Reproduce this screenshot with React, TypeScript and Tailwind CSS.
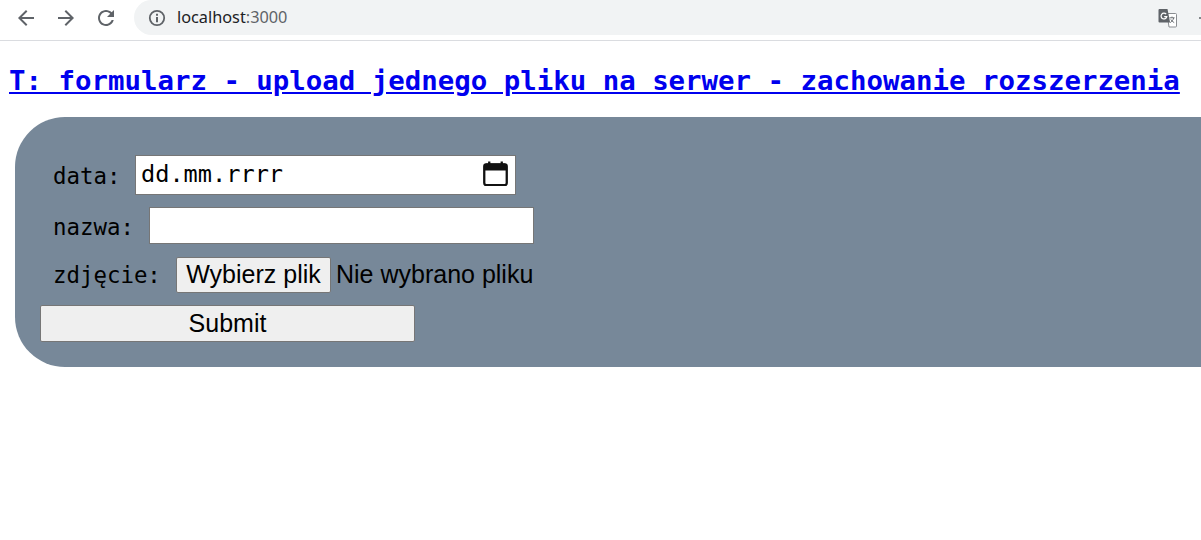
const labelClass = "font-['DejaVu_Sans_Mono',monospace] text-[22.4px] leading-none text-black"

function NavIcon({ d, className }: { d: string; className?: string }) {
  return (
    <svg viewBox="0 0 24 24" className={className} fill="#5f6368">
      <path d={d} />
    </svg>
  )
}

function TopBar() {
  return (
    <div className="flex h-[41px] items-start border-b border-[#dadce0] bg-white">
      <div className="flex h-[36px] w-[134px] shrink-0 items-center gap-[16px] pl-[14px]">
        <NavIcon className="h-[24px] w-[24px]" d="M20 11H7.83l5.59-5.59L12 4l-8 8 8 8 1.41-1.41L7.83 13H20v-2z" />
        <NavIcon className="h-[24px] w-[24px]" d="M12 4l-1.41 1.41L16.17 11H4v2h12.17l-5.58 5.59L12 20l8-8z" />
        <NavIcon className="h-[24px] w-[24px]" d="M17.65 6.35C16.2 4.9 14.21 4 12 4c-4.42 0-7.99 3.58-7.99 8s3.57 8 7.99 8c3.73 0 6.84-2.55 7.73-6h-2.08c-.82 2.33-3.04 4-5.65 4-3.31 0-6-2.69-6-6s2.69-6 6-6c1.66 0 3.14.69 4.22 1.78L13 11h7V4l-2.35 2.35z" />
      </div>
      <div className="flex h-[35px] flex-1 items-center rounded-l-[18px] bg-[#f1f3f4] pl-[14px]">
        <svg viewBox="0 0 18 18" className="h-[18px] w-[18px]">
          <circle cx="9" cy="9" r="7.2" fill="none" stroke="#5f6368" strokeWidth="1.8" />
          <path d="M8 8h2v5.2H8zM8 4.8h2v2H8z" fill="#5f6368" />
        </svg>
        <span className="ml-[11px] font-['Noto_Sans',sans-serif] text-[16.3px] text-[#202124]">
          localhost<span className="text-[#5f6368]">:3000</span>
        </span>
        <svg viewBox="0 0 20 20" className="ml-auto mr-[21px] h-[20px] w-[20px]">
          <path d="M9 5.5h8.5a1 1 0 0 1 1 1V18a1 1 0 0 1-1 1H11l-2-13.5z" fill="#fff" stroke="#8a8d91" strokeWidth="1" />
          <path d="M1.5 1h8l2.6 13.5H1.5a1 1 0 0 1-1-1V2a1 1 0 0 1 1-1z" fill="#5f6368" />
          <path d="M8.2 6.2a2.9 2.9 0 1 0 .6 2.4H6.2" fill="none" stroke="#fff" strokeWidth="1.2" />
          <path d="M11.5 9.8h5M14 8.6v1.2M15.8 9.8c-.6 2.2-2 3.8-3.6 4.8M12.8 11.4c.7 1.4 2 2.6 3.4 3.2" fill="none" stroke="#5f6368" strokeWidth="0.9" />
        </svg>
        <span className="h-[2px] w-[2px] rounded-full bg-[#5f6368]" />
      </div>
    </div>
  )
}

function Row({ children }: { children: React.ReactNode }) {
  return <div className="flex items-center">{children}</div>
}

export default function App() {
  return (
    <div className="min-h-[540px] overflow-hidden bg-white">
      <TopBar />
      <h1 className="mt-[22px] whitespace-nowrap pl-[9px] font-['DejaVu_Sans_Mono',monospace] text-[27.4px] font-bold leading-[36px]">
        <a href="#" className="text-[#0000ee] underline">
          T: formularz - upload jednego pliku na serwer - zachowanie rozszerzenia
        </a>
      </h1>
      <form className="ml-[15px] mt-[18px] flex h-[250px] flex-col items-start gap-[12px] rounded-l-[50px] bg-[#778899] pl-[25px] pt-[38px]">
        <Row>
          <label className={`${labelClass} ml-[13px] w-[82px] pt-[2px]`}>data:</label>
          <div className="flex h-[40px] w-[381px] items-center justify-between border border-[#767676] bg-white pl-[5px] pr-[7px]">
            <span className="font-['DejaVu_Sans_Mono',monospace] text-[23.6px] text-black">dd.mm.rrrr</span>
            <svg viewBox="0 0 24 24" className="mb-[3px] h-[25px] w-[25px]">
              <rect x="1.2" y="3.2" width="21.6" height="20" rx="2" fill="none" stroke="#111" strokeWidth="2.2" />
              <path d="M1.2 4.5a2 2 0 0 1 2-2h17.6a2 2 0 0 1 2 2V9H1.2z" fill="#111" />
              <path d="M6 .5v3M18 .5v3" stroke="#111" strokeWidth="2.2" />
            </svg>
          </div>
        </Row>
        <Row>
          <label className={`${labelClass} ml-[13px] w-[96px] pt-[3px]`}>nazwa:</label>
          <input className="h-[37px] w-[385px] border border-[#767676] bg-white outline-none" />
        </Row>
        <div className="flex h-[37px] items-center">
          <label className={`${labelClass} ml-[13px] w-[123px] pt-[1px]`}>zdjęcie:</label>
          <button type="button" className="h-[36px] w-[155px] rounded-[2px] border border-[#767676] bg-[#efefef] font-['Liberation_Sans',sans-serif] text-[25px] leading-none text-black">
            Wybierz plik
          </button>
          <span className="ml-[5px] font-['Liberation_Sans',sans-serif] text-[25px] leading-none text-black">Nie wybrano pliku</span>
        </div>
        <button type="submit" className="h-[37px] w-[375px] rounded-[2px] border border-[#767676] bg-[#efefef] font-['Liberation_Sans',sans-serif] text-[25px] leading-none text-black">
          Submit
        </button>
      </form>
    </div>
  )
}
